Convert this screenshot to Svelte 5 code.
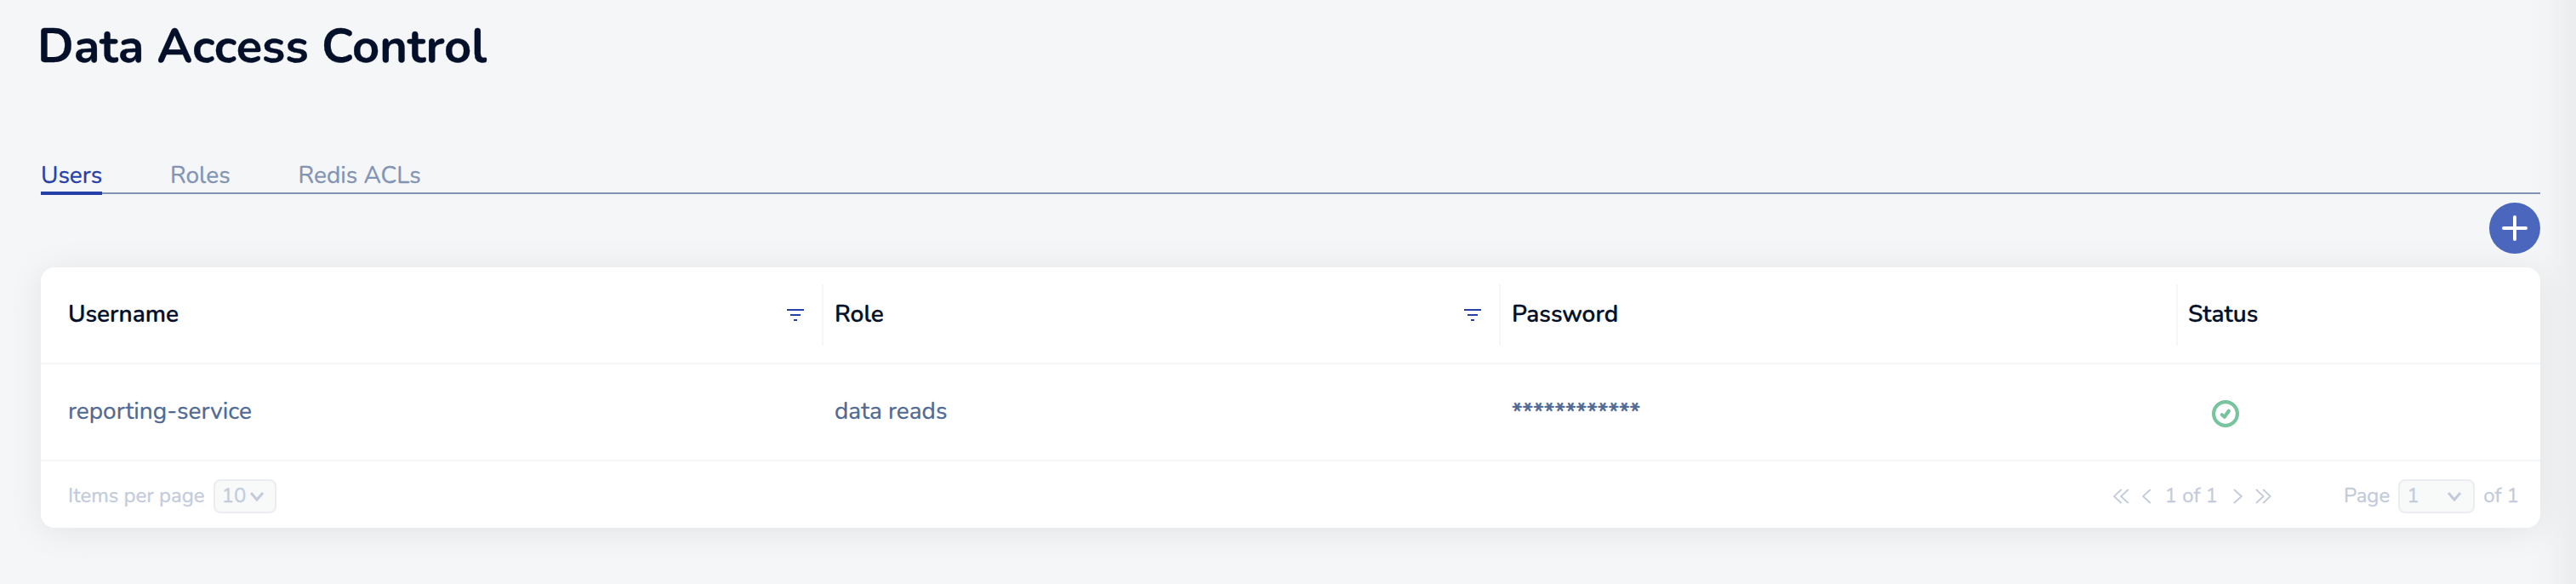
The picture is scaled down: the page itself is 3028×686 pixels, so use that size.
<script>
  const tabs = ['Users', 'Roles', 'Redis ACLs'];
  const columns = [
    { label: 'Username', filter: true },
    { label: 'Role', filter: true },
    { label: 'Password', filter: false },
    { label: 'Status', filter: false }
  ];
  const users = [{ name: 'reporting-service', role: 'data reads', password: '************' }];
</script>

<main>
  <h1>Data Access Control</h1>

  <nav>
    {#each tabs as tab, i}
      <span class="tab" class:active={i === 0}>{tab}</span>
    {/each}
  </nav>

  <div class="actions">
    <button class="add" aria-label="Add user">
      <svg width="60" height="60" viewBox="0 0 60 60"><path d="M30 17v26M17 30h26" /></svg>
    </button>
  </div>

  <section class="card">
    <div class="row head">
      {#each columns as col, i}
        <div class="cell">
          <span class="label">{col.label}</span>
          {#if col.filter}
            <svg class="filter" width="20" height="14" viewBox="0 0 20 14"><path d="M0 1h20M4 7h12M8 13h4" /></svg>
          {/if}
          {#if i < columns.length - 1}<i class="sep"></i>{/if}
        </div>
      {/each}
    </div>

    {#each users as user}
      <div class="row body">
        <div class="cell"><span class="label">{user.name}</span></div>
        <div class="cell"><span class="label">{user.role}</span></div>
        <div class="cell"><span class="label password">{user.password}</span></div>
        <div class="cell status">
          <svg width="32" height="32" viewBox="0 0 32 32">
            <circle cx="16" cy="16" r="13.9" />
            <path d="M11.9 17.2l2.9 2.6 5-7.1" />
          </svg>
        </div>
      </div>
    {/each}

    <footer>
      <span>Items per page</span>
      <div class="select size">
        <span>10</span>
        <svg width="18" height="12" viewBox="0 0 18 12"><path d="M2 2l7 8 7-8" /></svg>
      </div>
      <div class="pager">
        <svg width="19" height="18" viewBox="0 0 19 18"><path d="M9.6 1L1 9l8.6 8M17.8 1L9.2 9l8.6 8" /></svg>
        <svg class="prev" width="11" height="18" viewBox="0 0 11 18"><path d="M9.8 1L1 9l8.8 8" /></svg>
        <span>1 of 1</span>
        <svg class="next" width="11" height="18" viewBox="0 0 11 18"><path d="M1 1l8.8 8L1 17" /></svg>
        <svg width="19" height="18" viewBox="0 0 19 18"><path d="M1 1l8.6 8L1 17M9.2 1l8.6 8-8.6 8" /></svg>
      </div>
      <span class="page">Page</span>
      <div class="select number">
        <span>1</span>
        <svg width="18" height="12" viewBox="0 0 18 12"><path d="M2 2l7 8 7-8" /></svg>
      </div>
      <span>of 1</span>
    </footer>
  </section>
</main>

<style>
  :global(body) { background: #f5f6f8; overflow: hidden; }
  main {
    box-sizing: border-box;
    width: 3028px;
    height: 686px;
    padding: 23px 42px 0 48px;
    overflow: hidden;
    font: 400 28px/38px Nunito, Lato, sans-serif;
    color: #506a94;
    -webkit-text-stroke: 0.3px currentColor;
    background: linear-gradient(to left, #ebeced, #eff0f2 18px, #f3f4f6 36px, #f5f6f8 56px);
  }
  h1 {
    margin: 0 0 100px -4px;
    font-size: 56px;
    font-weight: 700;
    line-height: 64px;
    color: #041029;
  }
  nav {
    display: flex;
    gap: 80px;
    height: 39px;
    border-bottom: 2px solid #8294b3;
    color: #8294b3;
  }
  .tab { height: 38px; }
  .tab.active { color: #2540a8; border-bottom: 4px solid #2540a8; }
  .actions { display: flex; justify-content: flex-end; padding: 10px 0 16px; }
  .add {
    width: 60px;
    height: 60px;
    padding: 0;
    border: 0;
    border-radius: 50%;
    background: #4b67bd;
  }
  svg { display: block; flex: none; fill: none; }
  .add path { stroke: #fff; stroke-width: 4; stroke-linecap: round; }
  .card {
    height: 306px;
    border-radius: 16px;
    background: #fff;
    box-shadow: 0 4px 40px rgba(0, 0, 0, 0.08);
  }
  .row {
    display: grid;
    grid-template-columns: 920px 796px 796px 1fr;
    height: 112px;
    border-bottom: 2px solid #f5f6f7;
  }
  .cell { display: flex; align-items: center; padding-left: 13px; }
  .cell:first-child { padding-left: 32px; }
  .cell:last-child { padding-left: 12px; }
  .label { flex: 1; }
  .head { font-weight: 600; color: #041029; }
  .head .label { padding-bottom: 2px; }
  .body .label { padding-bottom: 3px; }
  .body .password { padding-bottom: 0; -webkit-text-stroke-width: 0.7px; }
  .filter path { stroke: #2540a8; stroke-width: 2; }
  .sep { width: 2px; height: 72px; margin-left: 21px; background: #f5f6f7; }
  .cell:nth-child(3) .sep { margin-left: 0; }
  .body .status { padding-left: 40px; padding-top: 4px; }
  .status svg { stroke: #77c49f; stroke-width: 4.2; stroke-linecap: round; stroke-linejoin: round; }
  footer {
    display: flex;
    align-items: center;
    height: 78px;
    padding: 4px 25px 0 32px;
    box-sizing: border-box;
    font-size: 24px;
    line-height: 32px;
    color: #c3cbdb;
  }
  footer > span, .pager > span { margin-top: -2px; }
  footer svg { stroke: #c3cbdb; stroke-width: 1.8; }
  .select {
    box-sizing: border-box;
    display: flex;
    align-items: center;
    height: 40px;
    border: 2px solid #ebedf3;
    border-radius: 8px;
    background: #f8f9f9;
  }
  .select span { flex: 1; margin-top: -2px; }
  .select svg { stroke-width: 3; }
  .size { width: 74px; margin-left: 10px; padding: 0 12px 0 8px; }
  .pager { display: flex; align-items: center; margin-left: auto; }
  .prev { margin: 0 16px 0 15px; }
  .next { margin: 0 15px 0 18px; }
  .page { margin-left: 85px; }
  .number { width: 90px; margin: 0 10px 0 10px; padding: 0 13px 0 8px; }
</style>
